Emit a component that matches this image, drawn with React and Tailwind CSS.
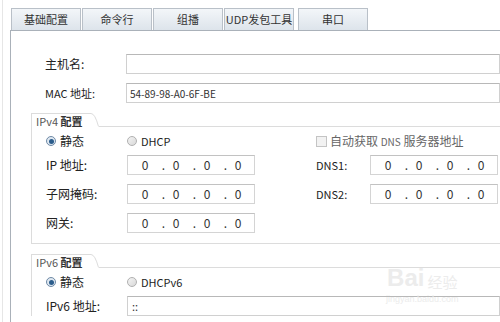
import React from 'react';

const tabs = ['基础配置', '命令行', '组播', 'UDP发包工具', '串口'];

const Radio = ({ checked }) => (
    <span
        className={`flex items-center justify-center w-[10px] h-[10px] rounded-full border ${checked ? 'border-[#6f8aa6] bg-[#dfe8f1]' : 'border-[#b0b0b0] bg-gradient-to-br from-[#f4f4f4] to-[#d8d8d8]'}`}
    >
        {checked && <span className="w-[5px] h-[5px] rounded-full bg-[#2c5d8c]" />}
    </span>
);

const IpInput = () => (
    <div className="flex items-center w-[128px] h-[20px] border border-[#d4d4d4] border-t-[#c2c2c2] bg-white pl-[12px] text-[12px] text-[#333]">
        {[0, 1, 2, 3].map((i) => (
            <React.Fragment key={i}>
                {i > 0 && <span className="w-[21px] text-center pl-[6px]">.</span>}
                <span className="w-[10px] text-center">0</span>
            </React.Fragment>
        ))}
    </div>
);

const GroupHeader = ({ title }) => (
    <div className="flex h-[14px]">
        <div className="w-[60px] border-t border-l border-[#dcdcdc] pl-[4px] text-[11px] leading-[14px] text-[#555] whitespace-nowrap">
            {title}
            <span className="font-bold text-[#333]"> 配置</span>
        </div>
        <svg width="8" height="14" viewBox="0 0 8 14" className="shrink-0">
            <path d="M0 0.5 Q4 0.5 7.5 13.5" stroke="#dcdcdc" fill="none" strokeWidth="1" />
        </svg>
        <div className="flex-1 border-b border-[#dcdcdc]" />
    </div>
);

const App = () => {
    return (
        <div
            className="relative w-[500px] h-[322px] bg-white overflow-hidden pl-[2px]"
            style={{ fontFamily: '"Noto Sans CJK SC", "Liberation Sans", sans-serif' }}
        >
            <div className="h-full border-l border-[#e6e6e6] pl-[7px] flex flex-col">
                {/* Tabs */}
                <div className="flex gap-[1px] mt-[8px] pl-[1px] h-[22px]">
                    {tabs.map((t, i) => (
                        <div
                            key={t}
                            className={`w-[70px] h-[22px] flex items-center justify-center border border-b-0 border-[#b9c0c8] bg-gradient-to-b from-[#f3f6f9] to-[#dde4eb] text-[11px] text-[#333] ${i === 4 ? 'ml-[3px]' : ''}`}
                        >
                            {t}
                        </div>
                    ))}
                </div>

                {/* Panel */}
                <div className="flex-1 border-t border-l border-[#aab1b9] pt-[23px] text-[12px] text-[#222]">
                    <div className="flex items-center h-[20px]">
                        <span className="w-[115px] pl-[34px]">主机名:</span>
                        <div className="flex-1 h-[20px] border border-[#d0d0d0] border-t-[#b8b8b8] bg-white" />
                    </div>
                    <div className="flex items-center h-[20px] mt-[9px]">
                        <span className="w-[115px] pl-[34px] text-[11px]">MAC 地址:</span>
                        <div className="flex-1 h-[20px] border border-[#d0d0d0] border-t-[#b8b8b8] bg-white flex items-center pl-[3px] text-[10px] text-[#333]">
                            54-89-98-A0-6F-BE
                        </div>
                    </div>

                    {/* IPv4 */}
                    <div className="ml-[20px] mt-[10px]">
                        <GroupHeader title="IPv4" />
                        <div className="border-l border-b border-[#dcdcdc] pt-[6px] pb-[10px] pl-[14px]">
                            <div className="flex items-center h-[16px]">
                                <div className="flex items-center gap-[4px] w-[81px]">
                                    <Radio checked />
                                    <span>静态</span>
                                </div>
                                <div className="flex items-center gap-[4px] w-[189px] text-[11px]">
                                    <Radio />
                                    <span>DHCP</span>
                                </div>
                                <div className="flex items-center gap-[3px] text-[#666]">
                                    <span className="w-[11px] h-[11px] border border-[#c4c4c4] bg-[#f2f2f2]" />
                                    <span>自动获取 <span className="text-[10px]">DNS</span> 服务器地址</span>
                                </div>
                            </div>
                            <div className="flex flex-col gap-[9px] mt-[6px]">
                                {[
                                    ['IP 地址:', 'DNS1:'],
                                    ['子网掩码:', 'DNS2:'],
                                    ['网关:', null],
                                ].map(([l, r]) => (
                                    <div key={l} className="flex items-center h-[20px]">
                                        <span className="w-[81px]">{l}</span>
                                        <IpInput />
                                        {r && (
                                            <>
                                                <span className="w-[54px] ml-[61px] text-[11px]">{r}</span>
                                                <IpInput />
                                            </>
                                        )}
                                    </div>
                                ))}
                            </div>
                        </div>
                    </div>

                    {/* IPv6 */}
                    <div className="ml-[20px] mt-[10px]">
                        <GroupHeader title="IPv6" />
                        <div className="border-l border-[#dcdcdc] pt-[6px] pl-[14px]">
                            <div className="flex items-center h-[16px]">
                                <div className="flex items-center gap-[4px] w-[81px]">
                                    <Radio checked />
                                    <span>静态</span>
                                </div>
                                <div className="flex items-center gap-[4px] text-[11px]">
                                    <Radio />
                                    <span>DHCPv6</span>
                                </div>
                            </div>
                            <div className="flex items-center h-[20px] mt-[6px]">
                                <span className="w-[81px]">IPv6 地址:</span>
                                <div className="flex-1 h-[20px] border border-[#d0d0d0] border-t-[#b8b8b8] bg-white flex items-center pl-[4px] text-[11px] text-[#333]">
                                    ::
                                </div>
                            </div>
                        </div>
                    </div>
                </div>
            </div>

            {/* watermark */}
            <div className="absolute left-[386px] top-[264px] flex flex-col items-center text-[#ececec] pointer-events-none">
                <div className="flex items-end gap-[3px] h-[26px] leading-none">
                    <span className="text-[24px] font-bold" style={{ fontFamily: '"Liberation Sans", sans-serif' }}>Bai</span>
                    <span className="text-[15px] pb-[1px]" style={{ fontFamily: '"Noto Sans CJK SC", sans-serif' }}>经验</span>
                </div>
                <span className="text-[9px] leading-none mt-[5px]" style={{ fontFamily: '"Liberation Sans", sans-serif' }}>jingyan.baidu.com</span>
            </div>
        </div>
    );
};

export default App;
